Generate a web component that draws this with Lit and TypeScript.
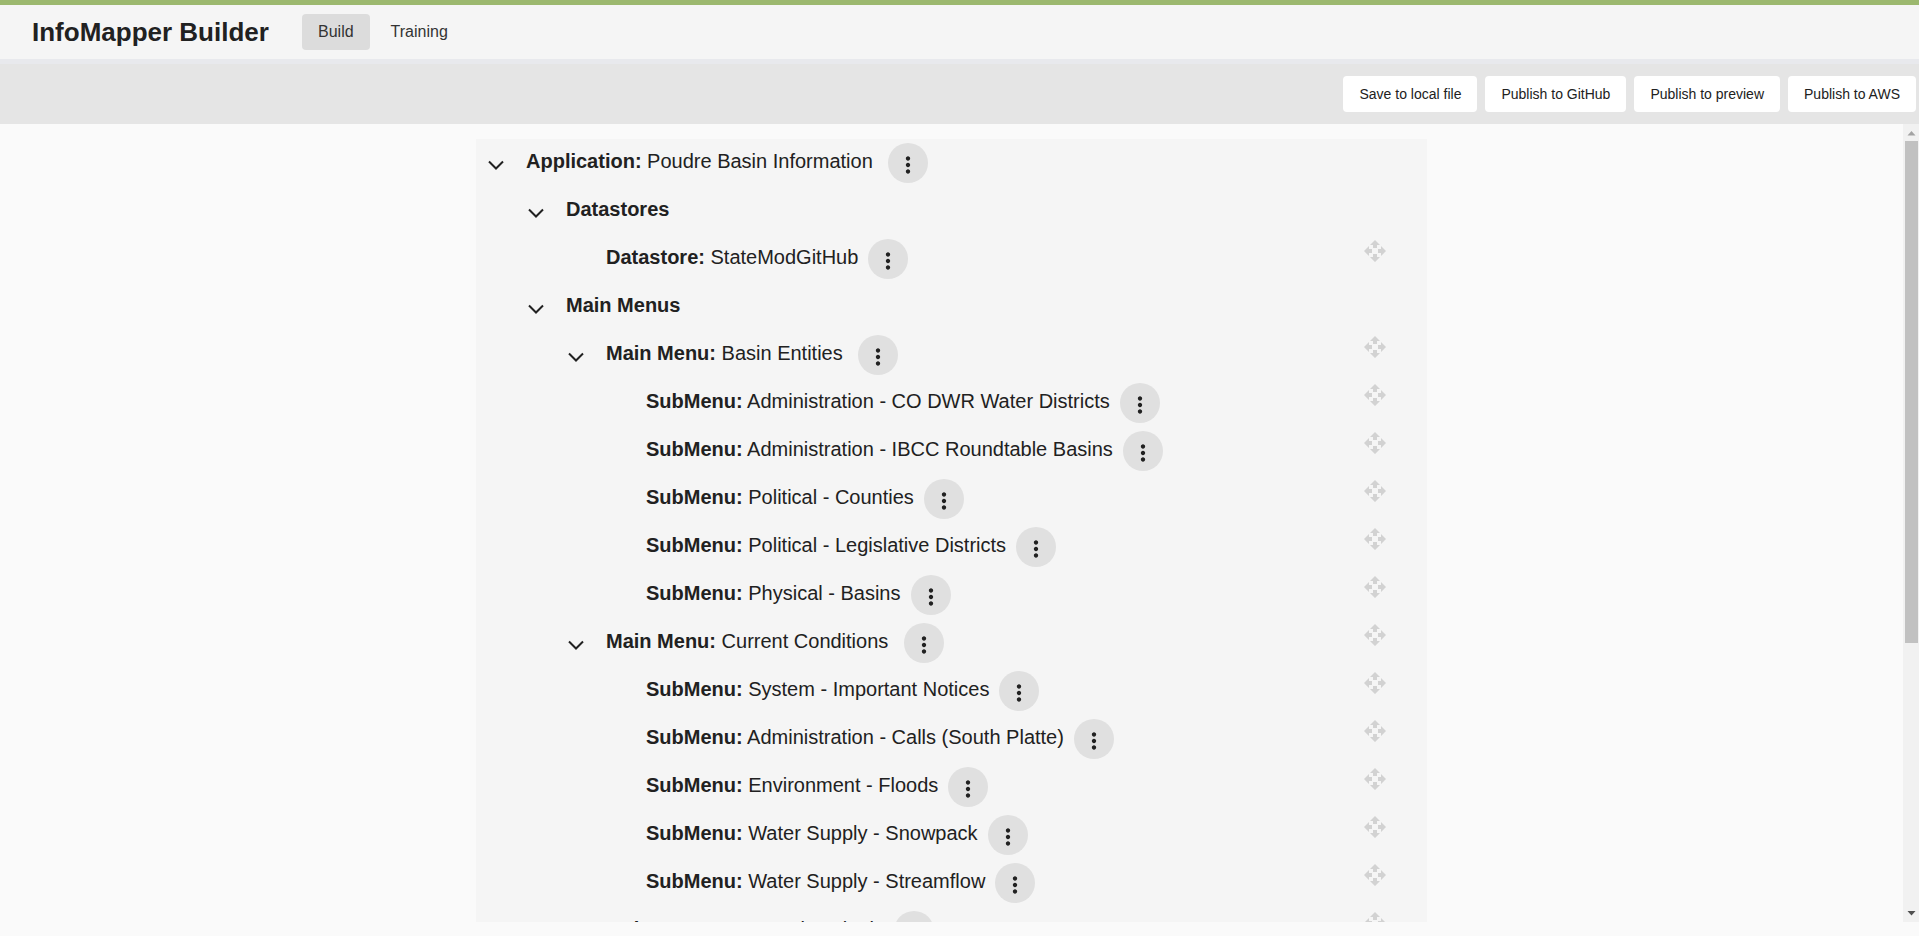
// InfoMapper Builder tree page
import { html, css, LitElement } from "lit";
import { customElement } from "lit/decorators.js";

type Row = {
  level: number;
  label?: string;
  name?: string;
  open?: boolean;
  menu?: boolean;
  drag?: boolean;
  gap?: number;
};

const rows: Row[] = [
  { level: 0, label: "Application:", name: "Poudre Basin Information", open: true, menu: true, gap: 15 },
  { level: 1, label: "Datastores", open: true },
  { level: 2, label: "Datastore:", name: "StateModGitHub", menu: true, drag: true },
  { level: 1, label: "Main Menus", open: true },
  { level: 2, label: "Main Menu:", name: "Basin Entities", open: true, menu: true, drag: true, gap: 15 },
  { level: 3, label: "SubMenu:", name: "Administration - CO DWR Water Districts", menu: true, drag: true },
  { level: 3, label: "SubMenu:", name: "Administration - IBCC Roundtable Basins", menu: true, drag: true },
  { level: 3, label: "SubMenu:", name: "Political - Counties", menu: true, drag: true },
  { level: 3, label: "SubMenu:", name: "Political - Legislative Districts", menu: true, drag: true },
  { level: 3, label: "SubMenu:", name: "Physical - Basins", menu: true, drag: true },
  { level: 2, label: "Main Menu:", name: "Current Conditions", open: true, menu: true, drag: true, gap: 16 },
  { level: 3, label: "SubMenu:", name: "System - Important Notices", menu: true, drag: true },
  { level: 3, label: "SubMenu:", name: "Administration - Calls (South Platte)", menu: true, drag: true },
  { level: 3, label: "SubMenu:", name: "Environment - Floods", menu: true, drag: true },
  { level: 3, label: "SubMenu:", name: "Water Supply - Snowpack", menu: true, drag: true },
  { level: 3, label: "SubMenu:", name: "Water Supply - Streamflow", menu: true, drag: true },
  { level: 2, label: "Main Menu:", name: "Seasonal Outlook", open: true, menu: true, drag: true, gap: 15 },
];

@customElement("app-root")
export class AppRoot extends LitElement {
  static styles = css`
    :host {
      display: flex;
      flex-direction: column;
      height: 100vh;
      overflow: hidden;
      background: #fafafa;
      color: #212121;
      font-family: "Liberation Sans", Arial, sans-serif;
    }
    .accent {
      height: 5px;
      flex: none;
      background: #9cb86f;
    }
    .nav {
      height: 54px;
      flex: none;
      display: flex;
      align-items: center;
      padding-left: 32px;
      background: #f5f5f5;
    }
    .title {
      font-size: 26px;
      font-weight: 700;
      width: 270px;
      color: #212121;
    }
    .tab {
      height: 36px;
      padding: 0 16px;
      margin-right: 5px;
      display: flex;
      align-items: center;
      font-size: 16px;
      color: #333;
      border-radius: 4px;
    }
    .tab.active {
      background: #dcdcdc;
    }
    .band {
      height: 5px;
      flex: none;
      background: #e8e9ed;
    }
    .toolbar {
      height: 60px;
      flex: none;
      display: flex;
      align-items: center;
      justify-content: flex-end;
      gap: 8px;
      padding-right: 3px;
      background: #e5e5e5;
    }
    .btn {
      height: 36px;
      padding: 0 16px;
      display: flex;
      align-items: center;
      background: #fff;
      border-radius: 4px;
      font-size: 14px;
      color: #212121;
    }
    .content {
      height: 798px;
      flex: none;
      display: flex;
    }
    .scroll {
      flex: 1;
      min-width: 0;
      overflow: hidden;
    }
    .scrollbar {
      width: 16px;
      flex: none;
      display: flex;
      flex-direction: column;
      background: #f1f1f1;
    }
    .arrow {
      height: 17px;
      flex: none;
      display: block;
      width: 16px;
    }
    .thumb {
      height: 502px;
      flex: none;
      margin: 0 1px 0 2px;
      background: #c1c1c1;
    }
    .track {
      flex: 1;
    }
    .tree {
      width: 951px;
      margin: 15px 0 0 476px;
      background: #f5f5f5;
    }
    .row {
      height: 48px;
      display: flex;
      align-items: center;
      position: relative;
      font-size: 20px;
      color: #212121;
    }
    .chevron {
      width: 24px;
      height: 24px;
      flex: none;
      margin: 4px 18px 0 8px;
    }
    .spacer {
      width: 50px;
      flex: none;
    }
    .text {
      white-space: nowrap;
      margin-top: -4px;
    }
    .text b {
      font-weight: 700;
    }
    .menu {
      width: 40px;
      height: 40px;
      flex: none;
      border-radius: 50%;
      background: #e0e0e0;
      display: flex;
      align-items: center;
      justify-content: center;
    }
    .menu svg {
      width: 26px;
      height: 26px;
      margin-top: 4px;
      fill: #212121;
    }
    .drag {
      position: absolute;
      left: 887px;
      top: 4px;
      width: 24px;
      height: 24px;
      fill: #d2d2d2;
    }
  `;

  renderRow(row: Row) {
    return html`
      <div class="row" style="padding-left:${row.level * 40}px">
        ${row.open
          ? html`<svg class="chevron" viewBox="0 0 24 24" fill="none" stroke="#212121" stroke-width="2">
              <path d="M5 8.5l7 7 7-7" />
            </svg>`
          : html`<span class="spacer"></span>`}
        <span class="text"><b>${row.label}</b>${row.name ? html` ${row.name}` : ""}</span>
        ${row.menu
          ? html`<span class="menu" style="margin-left:${row.gap ?? 10}px">
              <svg viewBox="0 0 24 24">
                <path d="M12 8c1.1 0 2-.9 2-2s-.9-2-2-2-2 .9-2 2 .9 2 2 2zm0 2c-1.1 0-2 .9-2 2s.9 2 2 2 2-.9 2-2-.9-2-2-2zm0 6c-1.1 0-2 .9-2 2s.9 2 2 2 2-.9 2-2-.9-2-2-2z" />
              </svg>
            </span>`
          : ""}
        ${row.drag
          ? html`<svg class="drag" viewBox="0 0 24 24">
              <path d="M10 9h4V6h3l-5-5-5 5h3v3zm-1 1H6V7l-5 5 5 5v-3h3v-4zm14 2l-5-5v3h-3v4h3v3l5-5zm-9 3h-4v3H7l5 5 5-5h-3v-3z" />
            </svg>`
          : ""}
      </div>
    `;
  }

  render() {
    return html`
      <div class="accent"></div>
      <div class="nav">
        <div class="title">InfoMapper Builder</div>
        <div class="tab active">Build</div>
        <div class="tab">Training</div>
      </div>
      <div class="band"></div>
      <div class="toolbar">
        <div class="btn">Save to local file</div>
        <div class="btn">Publish to GitHub</div>
        <div class="btn">Publish to preview</div>
        <div class="btn">Publish to AWS</div>
      </div>
      <div class="content">
        <div class="scroll">
          <div class="tree">${rows.map((row) => this.renderRow(row))}</div>
        </div>
        <div class="scrollbar">
          <svg class="arrow" viewBox="0 0 16 17"><path d="M4.5 11.5h8L8.5 7z" fill="#a3a3a3" /></svg>
          <div class="thumb"></div>
          <div class="track"></div>
          <svg class="arrow" viewBox="0 0 16 17"><path d="M4.5 6h8l-4 4.5z" fill="#505050" /></svg>
        </div>
      </div>
    `;
  }
}
